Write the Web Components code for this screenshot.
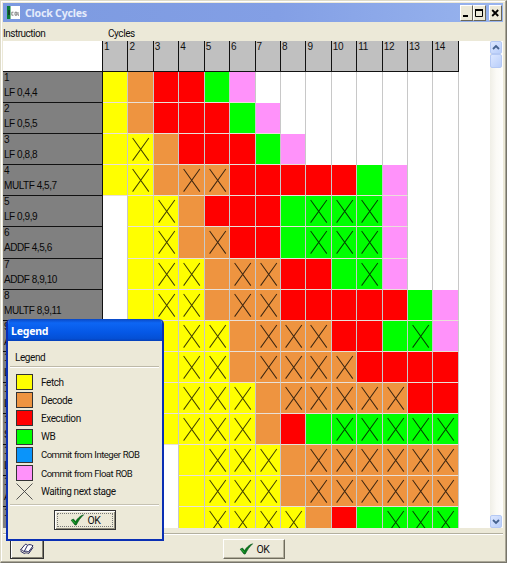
<!DOCTYPE html>
<html lang="en">
<head>
<meta charset="utf-8">
<title>Clock Cycles</title>
<style>
html,body{margin:0;width:507px;height:563px;overflow:hidden;background:#ece9d8}
body{font:10px Roboto,"Liberation Sans",sans-serif;letter-spacing:-.42px;color:#111}
</style>
</head>
<body>
<clock-window></clock-window>
<script>
const define = (name, html, setup) => customElements.define(name, class extends HTMLElement {
  connectedCallback() {
    if (this.shadowRoot) return;
    const t = document.createElement('template');
    t.innerHTML = html;
    this.attachShadow({mode: 'open'}).append(t.content.cloneNode(true));
    if (setup) setup(this, this.shadowRoot);
  }
});

const CHECK = `<svg width="15" height="12" viewBox="0 0 15 12"><path d="M1.2 6.2 3.4 5 5.6 7.6C7.500 4.400 10 2 13.600.8 10.500 3.600 8.400 6.800 6.200 11H5Z" fill="#087a18" stroke="#0b5a20" stroke-width=".7"/><path d="M2 6.3 5.3 9.3" stroke="#32b53c" stroke-width=".8"/></svg>`;

define('win-button', `<style>
:host{display:flex;box-sizing:border-box;align-items:center;justify-content:center;width:62px;height:20px;background:#ece9d8;border:1px solid;border-color:#fff #6f6c5d #6f6c5d #fff;box-shadow:inset -1px -1px #b4b09e;font-size:10.5px}
:host([focused]){border-color:#333;box-shadow:inset 1px 1px #fff,inset -1px -1px #8d8a7b}
.in{display:flex;align-items:center;justify-content:center;gap:3px;box-sizing:border-box;width:56px;height:14px}
:host([focused]) .in{border:1px dotted #777}
</style><div class="in">${CHECK}<slot></slot></div>`);

define('caption-button', `<style>
:host{display:block;box-sizing:border-box;width:13px;height:16px;background:#ece9d8;border:1px solid;border-color:#fff #6a675a #6a675a #fff}
svg{display:block}
</style><svg width="11" height="14" viewBox="0 0 11 14"></svg>`, (el, r) => {
  r.querySelector('svg').innerHTML = {
    min: '<path d="M2 10h5" stroke="#000" stroke-width="2"/>',
    max: '<path d="M1.5 4v6.500h7V4" fill="none" stroke="#000"/><path d="M1 4h8" stroke="#000" stroke-width="2"/>',
    close: '<path d="m2.200 4 6 6m0-6-6 6" stroke="#000" stroke-width="1.800"/>'
  }[el.getAttribute('kind')];
});

define('title-bar', `<style>
:host{display:flex;box-sizing:border-box;height:19px;align-items:center;padding:0 1px 0 4px;background:linear-gradient(90deg,#7c9ae0,#839fe5 55%,#98b4ee);color:#e4ebfb;font:bold 10.6px "Noto Sans",sans-serif}
.t{flex:1;margin-left:5px;letter-spacing:-.22px;white-space:nowrap}
.i{display:block}
caption-button:last-child{margin-left:3px}
</style><svg class="i" width="13" height="13" viewBox="0 0 13 13"><path fill="#fff" d="M0 0h13v13H0z"/><path fill="#087b35" d="M0 0h3.500v13H0z"/><path fill="#173f2b" d="M1 4h2v5H1z"/><path d="M6.500 6.200H4.800v3h1.700M8 6.200v3h1.800V6.200H8M11 6v3.200h1" fill="none" stroke="#555" stroke-width=".7"/></svg><span class="t"><slot></slot></span><caption-button kind="min"></caption-button><caption-button kind="max"></caption-button><caption-button kind="close"></caption-button>`);

define('stage-cell', `<style>
:host{display:block;box-sizing:border-box;border-right:1px solid #c8c8c8;overflow:hidden}
:host([s=F]){background-color:#ff0}:host([s=D]){background-color:#ee9440}:host([s=R]){background-color:#f00}:host([s=G]){background-color:#0f0}:host([s=P]){background-color:#ff92fa}
:host([s]){border-bottom:1px solid #e9e0d8}
svg{display:none;width:100%;height:100%}
:host([wait]) svg{display:block}
</style><svg viewBox="0 0 24.4 30" preserveAspectRatio="none"><path d="m4.600 4 16.200 22.500m0-22.500-16.200 22.500" fill="none" stroke="#000" stroke-opacity=".75" stroke-width="1"/></svg>`);

define('row-head', `<style>
:host{display:block;box-sizing:border-box;background:#808080;border-right:1px solid #111;border-bottom:1px solid #111;padding:0 0 0 1px;line-height:12px;white-space:nowrap;overflow:hidden;color:#080808;font-family:"Liberation Sans",sans-serif;letter-spacing:-.45px}
div+div{margin-top:3px}
</style><div><slot name="n"></slot></div><div><slot></slot></div>`);

define('cycle-grid', `<style>
:host{display:grid;height:487px;overflow:hidden;background:#fff;width:456px;grid-template-columns:100px repeat(14,25.43px);grid-template-rows:31px;grid-auto-rows:31.1px}
.h{box-sizing:border-box;background:#c0c0c0;border-right:1px solid #111;border-bottom:1px solid #111;padding:0 0 0 1px;font:10px/12px "Liberation Sans",sans-serif;letter-spacing:-.3px}
.c{box-sizing:border-box;border-right:1px solid #111;border-bottom:1px solid #111}
</style><div class="c"></div>`, (el, r) => {
  const heads = ['LF 0,4,4','LF 0,5,5','LF 0,8,8','MULTF 4,5,7','LF 0,9,9','ADDF 4,5,6','ADDF 8,9,10','MULTF 8,9,11','A','L','L','S','L','A',''];
  // Upper case: active stage; lower case: waiting for the next one; dot: idle.
  const rows = [
    'FDRRGP........','FDRRRGP.......','FfDRRRGP......','FfDddRRRRRGP..',
    '.FfDRRRGgggP..','.FfDdRRGgggP..','.FffDddRRGgP..','.FffDddRRRRRGP',
    '..FffDdddRRGgP','..FffDddddRRRR','..FfffDdddddRR','..FfffDRGggggg',
    '...FfffDdddddd','...FfffDdddddd','...FffffDRGggg'];
  for (let i = 1; i <= 14; i++) {
    const h = document.createElement('div'); h.className = 'h'; h.textContent = i; r.append(h);
  }
  rows.forEach((row, i) => {
    const head = document.createElement('row-head');
    const n = document.createElement('span'); n.slot = 'n'; n.textContent = i + 1;
    head.append(n, heads[i]); r.append(head);
    for (const ch of row) {
      const c = document.createElement('stage-cell');
      if (ch !== '.') { c.setAttribute('s', ch.toUpperCase()); if (ch !== ch.toUpperCase()) c.setAttribute('wait', ''); }
      r.append(c);
    }
  });
});

define('scroll-bar', `<style>
:host{display:flex;flex-direction:column;width:13px;height:487px;background:linear-gradient(90deg,#f0efe7,#fbfaf6 50%,#fefefc)}
.b{box-sizing:border-box;width:12px;height:13px;border:1px solid #b5c9f4;border-radius:2px;background:linear-gradient(135deg,#dce7ff,#b9cefa)}
.th{height:14px}
.sp{flex:1}
svg{display:block}
</style><div class="b"><svg width="10" height="11" viewBox="0 0 10 11"><path d="m2 7 3-3 3 3" fill="none" stroke="#45628f" stroke-width="1.800"/></svg></div><div class="b th"></div><div class="sp"></div><div class="b"><svg width="10" height="11" viewBox="0 0 10 11"><path d="m2 4 3 3 3-3" fill="none" stroke="#45628f" stroke-width="1.800"/></svg></div>`);

define('legend-item', `<style>
:host{display:flex;align-items:center;height:18.2px;white-space:nowrap}
.s{box-sizing:border-box;width:17px;height:16px;border:1px solid #333;margin-right:8px}
svg{margin-right:8px;display:block}
</style>`, (el, r) => {
  const c = el.getAttribute('color');
  const t = document.createElement('template');
  t.innerHTML = (c ? `<div class="s" style="background:${c}"></div>` : '<svg width="17" height="17" viewBox="0 0 17 17"><path d="m.5.5 16 16m0-16-16 16" stroke="#444" stroke-width=".9"/></svg>') + '<slot></slot>';
  r.append(t.content);
});

define('legend-dialog', `<style>
:host{display:flex;flex-direction:column;box-sizing:border-box;width:158px;height:222px;background:#ece9d8;border:2px solid #0a2fb4;border-top:0;border-radius:5px 5px 0 0;overflow:hidden}
.t{height:22px;margin:0 -2px;padding-left:5px;box-sizing:border-box;background:linear-gradient(#0a48c4,#0d66f4 18%,#0558e6 60%,#0450d6 88%,#0640b8);color:#fff;font:bold 10.5px/25px "Noto Sans",sans-serif;letter-spacing:-.2px}
.g{margin:11px 3px 0 2px;height:14px;line-height:12px;padding-left:5px;border-bottom:1px solid #bdb9a8;box-shadow:0 1px #fff}
.l{margin:6px 0 0 8px}
.tight{font-size:9.5px;letter-spacing:-.5px;word-spacing:.4px}
.f{margin:4px 3px 0 2px;border-top:1px solid #c5c1b1;box-shadow:inset 0 1px #fff;padding:5px 0 0 44px}
</style><div class="t">Legend</div><div class="g">Legend</div>
<div class="l"><legend-item color="#ff0">Fetch</legend-item><legend-item color="#ee9440">Decode</legend-item><legend-item color="#f00">Execution</legend-item><legend-item color="#0f0">WB</legend-item><legend-item class="tight" color="#0a94fa">Commit from Integer ROB</legend-item><legend-item class="tight" color="#ff92fa">Commit from Float ROB</legend-item><legend-item>Waiting next stage</legend-item></div>
<div class="f"><win-button focused>OK</win-button></div>`);

define('clock-window', `<style>
:host{display:flex;flex-direction:column;position:relative;box-sizing:border-box;width:507px;height:563px;background:#ece9d8;border:1px solid;border-color:#dedbc9 #77756b #77756b #dedbc9;box-shadow:inset -1px -1px #aaa797,inset 1px 1px #fff;padding:2px 3px 0 2px}
.lab{display:flex;height:19px;box-sizing:border-box;padding-top:6px;line-height:12px}
.lab span:first-child{width:105px;letter-spacing:-.5px}
.v{display:flex;height:487px;background:#fff}
scroll-bar{margin-left:auto}
.foot{display:flex;margin-top:5px;border-top:1px solid #b3b09f;box-shadow:inset 0 1px #fff;flex:1;padding:5px 0 0 220px}
.book{display:flex;align-items:center;justify-content:center;position:absolute;left:9px;top:538px;width:34px;height:20px;box-sizing:border-box;border:1px solid #333;box-shadow:inset 1px 1px #fff,inset -1px -1px #858273}
legend-dialog{position:absolute;left:5px;top:318px}
</style><title-bar>Clock Cycles</title-bar>
<div class="lab"><span>Instruction</span><span>Cycles</span></div>
<div class="v"><cycle-grid></cycle-grid><scroll-bar></scroll-bar></div>
<div class="foot"><win-button>OK</win-button></div>
<div class="book"><svg width="16" height="12" viewBox="0 0 16 12"><path d="M1.500 7 6 1.500C7 1 8 1.500 8.500 2.200 10 1.200 12 1.500 14 2.800L9.500 9C8 8 6.500 8 5.200 8.800 4.500 7.500 3 7 1.500 7Z" fill="#fff" stroke="#25255e"/><path d="M8.500 2.200 5.200 8.500M1.500 8.200 5.300 10.500C6.800 9.500 8.200 9.800 9.700 10.500L14 4.500" fill="none" stroke="#25255e"/></svg></div>
<legend-dialog></legend-dialog>`);
</script>
</body>
</html>
